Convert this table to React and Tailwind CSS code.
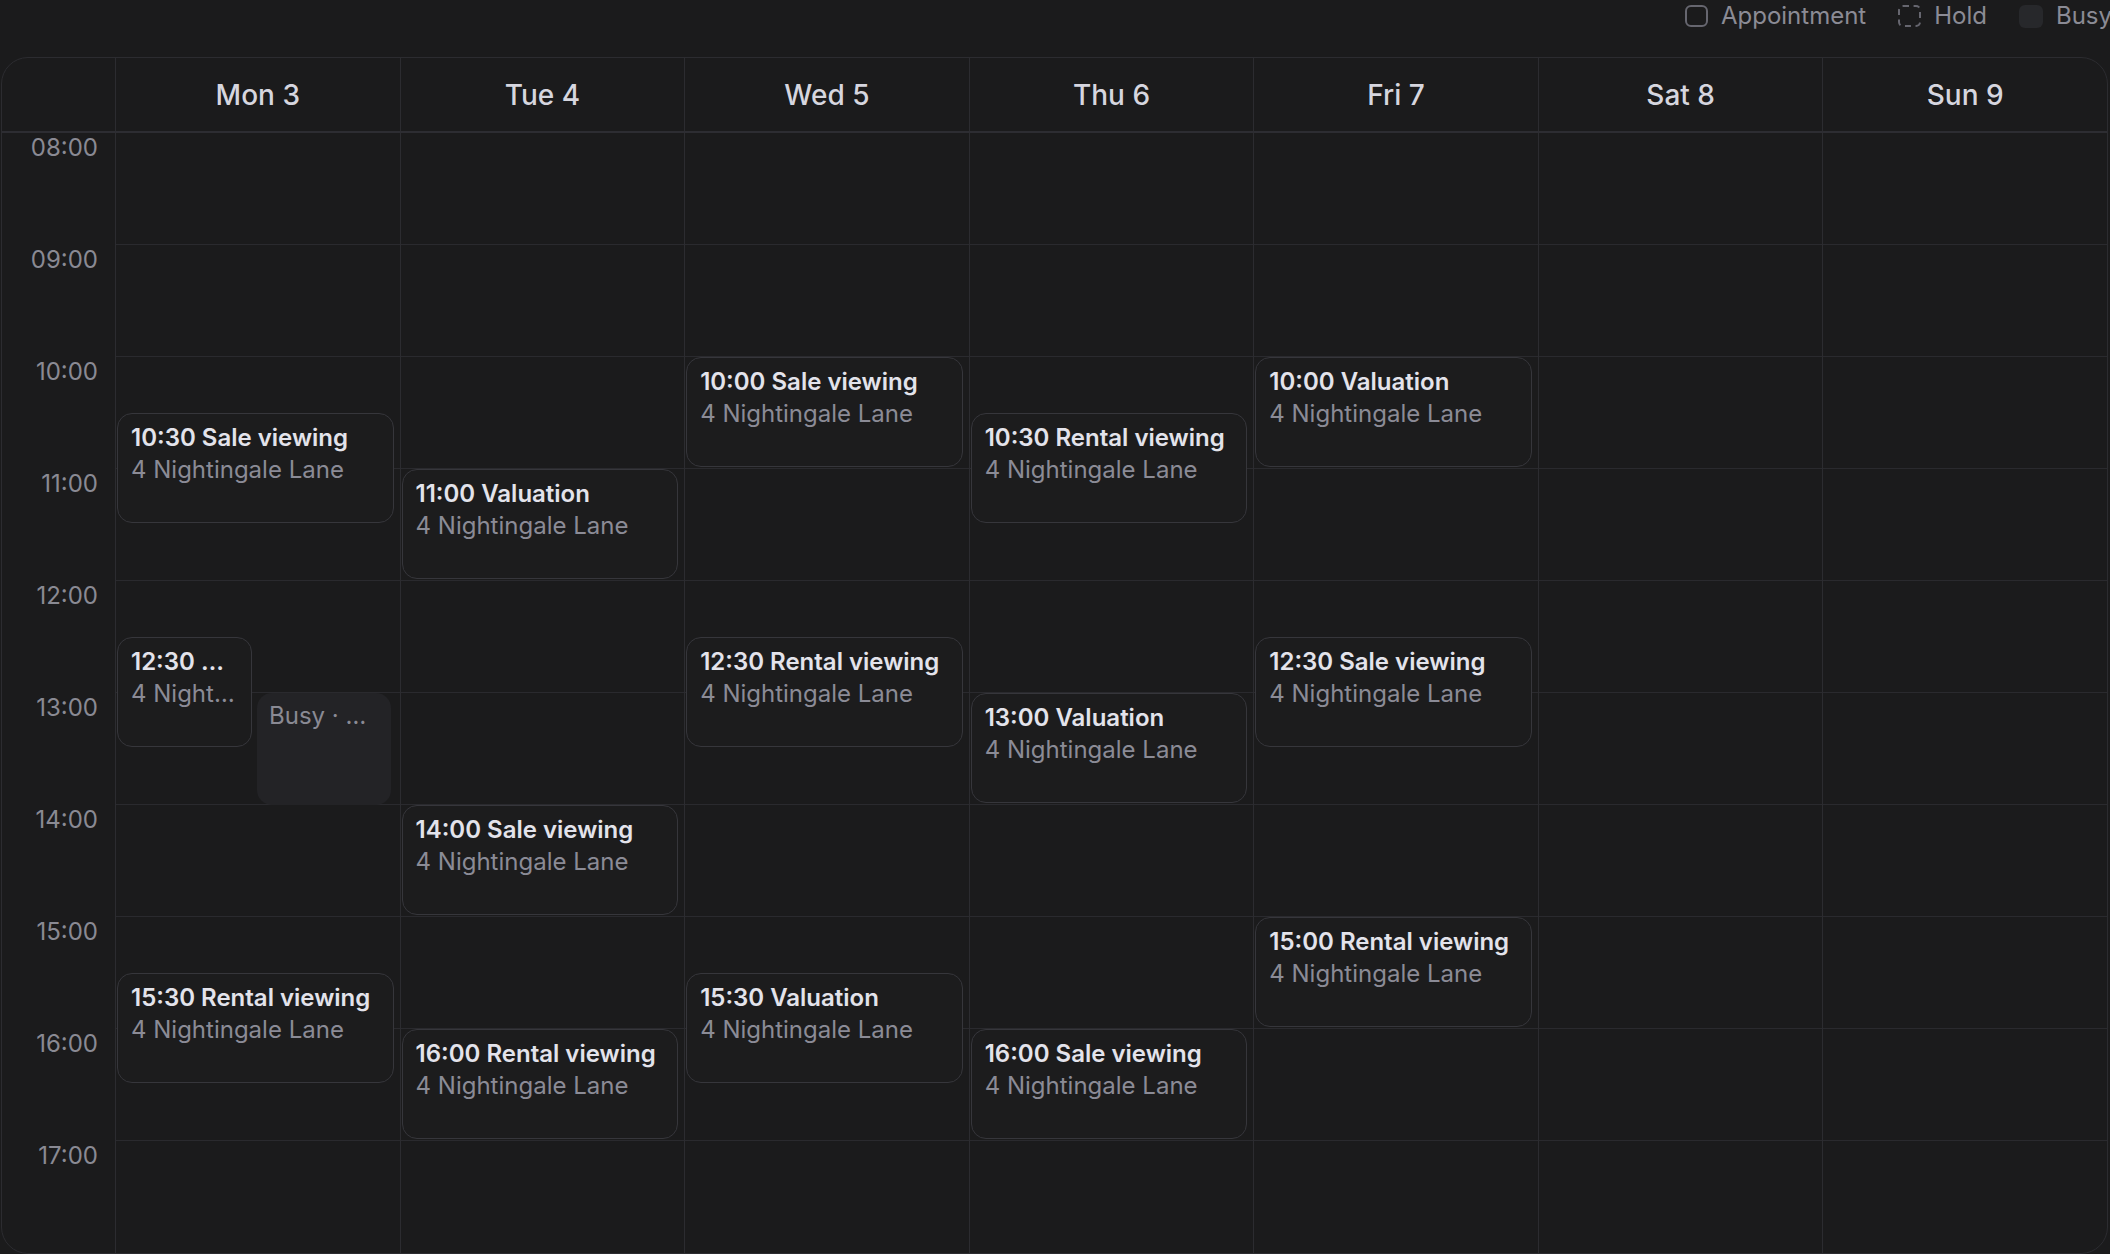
import React from "react";

const days = ["Mon 3", "Tue 4", "Wed 5", "Thu 6", "Fri 7", "Sat 8", "Sun 9"];
const hours = ["08:00", "09:00", "10:00", "11:00", "12:00", "13:00", "14:00", "15:00", "16:00", "17:00"];
const HOUR = 112;

// start is in hours, all slots are one hour long
const events = [
  { day: 0, start: 10.5, title: "10:30 Sale viewing" },
  { day: 0, start: 12.5, title: "12:30 …", place: "4 Night…", half: "left" },
  { day: 0, start: 13, busy: "Busy · …", half: "right" },
  { day: 0, start: 15.5, title: "15:30 Rental viewing" },
  { day: 1, start: 11, title: "11:00 Valuation" },
  { day: 1, start: 14, title: "14:00 Sale viewing" },
  { day: 1, start: 16, title: "16:00 Rental viewing" },
  { day: 2, start: 10, title: "10:00 Sale viewing" },
  { day: 2, start: 12.5, title: "12:30 Rental viewing" },
  { day: 2, start: 15.5, title: "15:30 Valuation" },
  { day: 3, start: 10.5, title: "10:30 Rental viewing" },
  { day: 3, start: 13, title: "13:00 Valuation" },
  { day: 3, start: 16, title: "16:00 Sale viewing" },
  { day: 4, start: 10, title: "10:00 Valuation" },
  { day: 4, start: 12.5, title: "12:30 Sale viewing" },
  { day: 4, start: 15, title: "15:00 Rental viewing" },
];

function LegendItem({ box, label }) {
  return (
    <div className="flex shrink-0 items-center gap-[13px]">
      {box}
      <span className="whitespace-nowrap">{label}</span>
    </div>
  );
}

function EventCard({ ev }) {
  const top = (ev.start - 8) * HOUR;
  let pos = "left-[1px] right-[6px]";
  if (ev.half === "left") pos = "left-[1px] w-[135px]";
  if (ev.half === "right") pos = "left-[141px] w-[134px]";

  if (ev.busy) {
    return (
      <div
        className={`absolute ${pos} h-[112px] rounded-[15px] bg-[#232326] px-[12px] pt-[7px] text-[24px] leading-[32px] text-[#8a8a94] whitespace-nowrap overflow-hidden`}
        style={{ top }}
      >
        {ev.busy}
      </div>
    );
  }

  return (
    <div
      className={`absolute ${pos} h-[110px] rounded-[15px] border border-[#36363b] bg-[#1c1c1d] px-[13px] pt-[8px] text-[24px] leading-[32px] whitespace-nowrap overflow-hidden`}
      style={{ top }}
    >
      <div className="font-semibold text-[#e3e3eb]">{ev.title}</div>
      <div className="text-[#8b8b96]">{ev.place || "4 Nightingale Lane"}</div>
    </div>
  );
}

export default function App() {
  return (
    <div className="h-screen w-screen overflow-hidden bg-[#1b1b1c] pl-[1px] pr-[2px] font-['Inter',sans-serif]">
      {/* legend */}
      <div className="-mr-[4px] flex h-[32px] items-center justify-end gap-[32px] text-[24px] text-[#8b8b95]">
        <LegendItem
          label="Appointment"
          box={<div className="h-[22px] w-[23px] rounded-[6px] border-2 border-[#66666f]" />}
        />
        <LegendItem
          label="Hold"
          box={<div className="h-[22px] w-[23px] rounded-[5px] border-2 border-dashed border-[#66666f]" />}
        />
        <LegendItem
          label="Busy"
          box={<div className="h-[23px] w-[24px] rounded-[6px] bg-[#27282b]" />}
        />
      </div>

      {/* calendar */}
      <div className="mt-[25px] overflow-hidden rounded-[27px] border border-[#2c2c30] bg-[#1b1b1c]">
        <div className="grid grid-cols-[113px_repeat(7,1fr)] border-b-2 border-[#2d2d32]">
          <div className="h-[73px]" />
          {days.map((d) => (
            <div
              key={d}
              className="flex h-[73px] items-center justify-center border-l border-[#2c2c30] text-[28px] font-medium text-[#d6d6df]"
            >
              {d}
            </div>
          ))}
        </div>

        <div className="grid grid-cols-[113px_repeat(7,1fr)]">
          <div>
            {hours.map((h) => (
              <div
                key={h}
                className="h-[112px] pr-[17px] pt-[1px] text-right text-[24px] leading-[28px] text-[#8a8a93]"
              >
                {h}
              </div>
            ))}
          </div>
          {days.map((d, i) => (
            <div key={d} className="relative border-l border-[#2c2c30]">
              {hours.map((h, j) => (
                <div
                  key={h}
                  className={j < hours.length - 1 ? "h-[112px] border-b border-[#2a2a2e]" : "h-[112px]"}
                />
              ))}
              {events
                .filter((ev) => ev.day === i)
                .map((ev) => (
                  <EventCard key={ev.start + ev.day * 100} ev={ev} />
                ))}
            </div>
          ))}
        </div>
      </div>
    </div>
  );
}
